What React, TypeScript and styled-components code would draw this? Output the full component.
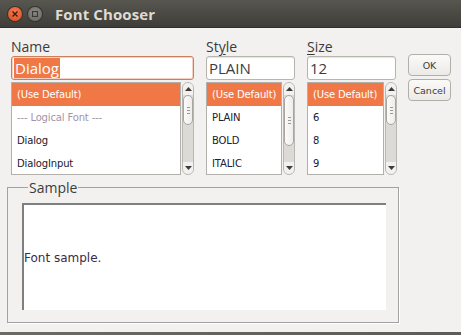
import React from 'react';
import styled, { createGlobalStyle } from 'styled-components';

const GlobalStyle = createGlobalStyle`
  html, body {
    margin: 0;
    padding: 0;
    background: #f2f1f0;
    overflow: hidden;
  }
`;

const Window = styled.div`
  width: 461px;
  height: 335px;
  display: flex;
  flex-direction: column;
  background: #f2f1f0;
  font-family: "Open Sans", "DejaVu Sans", sans-serif;
  color: #3c3c3c;
`;

const TitleBar = styled.div`
  height: 28px;
  flex-shrink: 0;
  display: flex;
  align-items: center;
  padding-left: 8px;
  background: linear-gradient(#58564f, #3e3d39);
  border-bottom: 1px solid #2f2e2b;
  box-sizing: border-box;
`;

const WinButton = styled.div<{ $close?: boolean }>`
  width: 14px;
  height: 14px;
  border-radius: 50%;
  margin-right: 6px;
  display: flex;
  align-items: center;
  justify-content: center;
  background: ${(p) =>
    p.$close
      ? 'radial-gradient(circle at 50% 35%, #f57a4f, #de4a1b)'
      : 'radial-gradient(circle at 50% 35%, #8a8984, #66655f)'};
  box-shadow: 0 0 0 1px #34332f;
`;

const Title = styled.div`
  margin-left: 7px;
  font-family: "Open Sans", "DejaVu Sans", sans-serif;
  font-weight: 700;
  font-size: 15px;
  color: #dfdbd2;
  letter-spacing: 0.1px;
`;

const Content = styled.div`
  flex: 1;
  display: flex;
  flex-direction: column;
  padding: 9px 7px 0 7px;
`;

const TopRow = styled.div`
  display: flex;
  margin-left: 4px;
`;

const Column = styled.div<{ $width: number }>`
  width: ${(p) => p.$width}px;
  display: flex;
  flex-direction: column;
  margin-right: 12px;
`;

const Label = styled.div`
  font-size: 14px;
  line-height: 19px;
  height: 19px;
  color: #3c3c3c;
  u {
    text-decoration-thickness: 1px;
    text-underline-offset: 2px;
  }
`;

const Field = styled.div<{ $focus?: boolean; $width: number }>`
  width: ${(p) => p.$width}px;
  height: 24px;
  box-sizing: border-box;
  border: 1px solid ${(p) => (p.$focus ? '#c9805f' : '#b8b5b0')};
  border-radius: 3px;
  background: #fff;
  display: flex;
  align-items: center;
  padding-left: 2px;
  font-size: 15px;
  color: #3c3c3c;
  box-shadow: ${(p) => (p.$focus ? 'inset 0 0 0 1px #f6d0c0' : 'inset 0 1px 1px #e6e4e2')};
`;

const Selected = styled.span`
  background: #f07746;
  color: #fff;
  padding: 0 1px;
  line-height: 20px;
`;

const ListWrap = styled.div`
  display: flex;
  margin-top: 2px;
  height: 93px;
`;

const ListBox = styled.div`
  flex: 1;
  border: 1px solid #b3b0ab;
  background: #fff;
  overflow: hidden;
`;

const Row = styled.div<{ $selected?: boolean; $muted?: boolean }>`
  height: 23px;
  line-height: 23px;
  padding-left: 5px;
  font-family: "DejaVu Sans", sans-serif;
  font-size: 10px;
  letter-spacing: -0.15px;
  white-space: nowrap;
  background: ${(p) => (p.$selected ? '#f07746' : '#fff')};
  color: ${(p) => (p.$selected ? '#fff' : p.$muted ? '#a394a9' : '#22202e')};
`;

const Scroll = styled.div`
  width: 12px;
  margin-left: 1px;
  box-sizing: border-box;
  border: 1px solid #b9b7b2;
  border-radius: 6px;
  background: #dcdad6;
  display: flex;
  flex-direction: column;
  align-items: center;
  overflow: hidden;
`;

const ArrowCell = styled.div`
  height: 12px;
  width: 100%;
  background: #f2f1f0;
  display: flex;
  align-items: center;
  justify-content: center;
  flex-shrink: 0;
`;

const Thumb = styled.div<{ $height: number }>`
  width: 10px;
  height: ${(p) => p.$height}px;
  box-sizing: border-box;
  border: 1px solid #a9a6a1;
  border-radius: 5px;
  background: linear-gradient(90deg, #fbfbfa, #eeedeb);
  display: flex;
  flex-direction: column;
  align-items: center;
  justify-content: center;
  gap: 2px;
  flex-shrink: 0;
`;

const Grip = styled.div`
  width: 3px;
  height: 1px;
  background: #9c9a96;
`;

const Spacer = styled.div`
  flex: 1;
`;

const ButtonCol = styled.div`
  display: flex;
  flex-direction: column;
  gap: 3px;
  padding-top: 17px;
  margin-left: -1px;
`;

const Button = styled.button`
  width: 43px;
  height: 22px;
  box-sizing: border-box;
  border: 1px solid #b2afaa;
  border-radius: 4px;
  background: linear-gradient(#fafaf9, #eceae7);
  font-family: "DejaVu Sans", sans-serif;
  font-size: 9.5px;
  color: #3c3c3c;
  padding: 0;
  display: flex;
  align-items: center;
  justify-content: center;
`;

const SampleSet = styled.fieldset`
  margin: 5px 0 0 0;
  width: 392px;
  height: 143px;
  box-sizing: border-box;
  border: 1px solid #a2a2a2;
  box-shadow: 1px 1px 0 #ffffff;
  padding: 0 12px 0 14px;
  min-width: 0;
`;

const Legend = styled.legend`
  font-size: 14px;
  color: #3c3c3c;
  padding: 0 1px;
  margin-left: 6px;
  line-height: 15px;
`;

const SampleArea = styled.div`
  height: 107px;
  margin-top: 8px;
  box-sizing: border-box;
  background: #fff;
  border-top: 2px solid #7f7f7f;
  border-left: 2px solid #7f7f7f;
  display: flex;
  align-items: center;
  font-family: "DejaVu Sans", sans-serif;
  font-size: 12px;
  color: #3b2a45;
`;

const BottomStrip = styled.div`
  height: 3px;
  flex-shrink: 0;
  margin-top: auto;
  background: linear-gradient(90deg, #6b6a66, #5c5b57);
`;

const ScrollBar = ({ thumb }: { thumb: number }) => (
  <Scroll>
    <ArrowCell>
      <svg width="7" height="4" viewBox="0 0 7 4">
        <path d="M0 4 L3.5 0 L7 4 Z" fill="#3c3c3c" />
      </svg>
    </ArrowCell>
    <Thumb $height={thumb}>
      <Grip />
      <Grip />
      <Grip />
    </Thumb>
    <Spacer />
    <ArrowCell>
      <svg width="7" height="4" viewBox="0 0 7 4">
        <path d="M0 0 L3.5 4 L7 0 Z" fill="#3c3c3c" />
      </svg>
    </ArrowCell>
  </Scroll>
);

type Item = { text: string; selected?: boolean; muted?: boolean };

const List = ({ items, thumb }: { items: Item[]; thumb: number }) => (
  <ListWrap>
    <ListBox>
      {items.map((it) => (
        <Row key={it.text} $selected={it.selected} $muted={it.muted}>
          {it.text}
        </Row>
      ))}
    </ListBox>
    <ScrollBar thumb={thumb} />
  </ListWrap>
);

export default function App() {
  return (
    <Window>
      <GlobalStyle />
      <TitleBar>
        <WinButton $close>
          <svg width="6" height="6" viewBox="0 0 6 6">
            <path d="M0.5 0.5 L5.5 5.5 M5.5 0.5 L0.5 5.5" stroke="#3a1a10" strokeWidth="1.4" />
          </svg>
        </WinButton>
        <WinButton>
          <svg width="6" height="6" viewBox="0 0 6 6">
            <rect x="0.5" y="0.5" width="5" height="5" fill="none" stroke="#3a3935" strokeWidth="1.2" />
          </svg>
        </WinButton>
        <Title>Font Chooser</Title>
      </TitleBar>
      <Content>
        <TopRow>
          <Column $width={183}>
            <Label>Name</Label>
            <Field $focus $width={183}>
              <Selected>Dialog</Selected>
            </Field>
            <List
              thumb={30}
              items={[
                { text: '(Use Default)', selected: true },
                { text: '--- Logical Font ---', muted: true },
                { text: 'Dialog' },
                { text: 'DialogInput' },
              ]}
            />
          </Column>
          <Column $width={89}>
            <Label>
              St<u>y</u>le
            </Label>
            <Field $width={89}>PLAIN</Field>
            <List
              thumb={51}
              items={[
                { text: '(Use Default)', selected: true },
                { text: 'PLAIN' },
                { text: 'BOLD' },
                { text: 'ITALIC' },
              ]}
            />
          </Column>
          <Column $width={90}>
            <Label>
              <u>S</u>ize
            </Label>
            <Field $width={89}>12</Field>
            <List
              thumb={30}
              items={[
                { text: '(Use Default)', selected: true },
                { text: '6' },
                { text: '8' },
                { text: '9' },
              ]}
            />
          </Column>
          <ButtonCol>
            <Button>OK</Button>
            <Button>Cancel</Button>
          </ButtonCol>
        </TopRow>
        <SampleSet>
          <Legend>Sample</Legend>
          <SampleArea>Font sample.</SampleArea>
        </SampleSet>
      </Content>
      <BottomStrip />
    </Window>
  );
}
